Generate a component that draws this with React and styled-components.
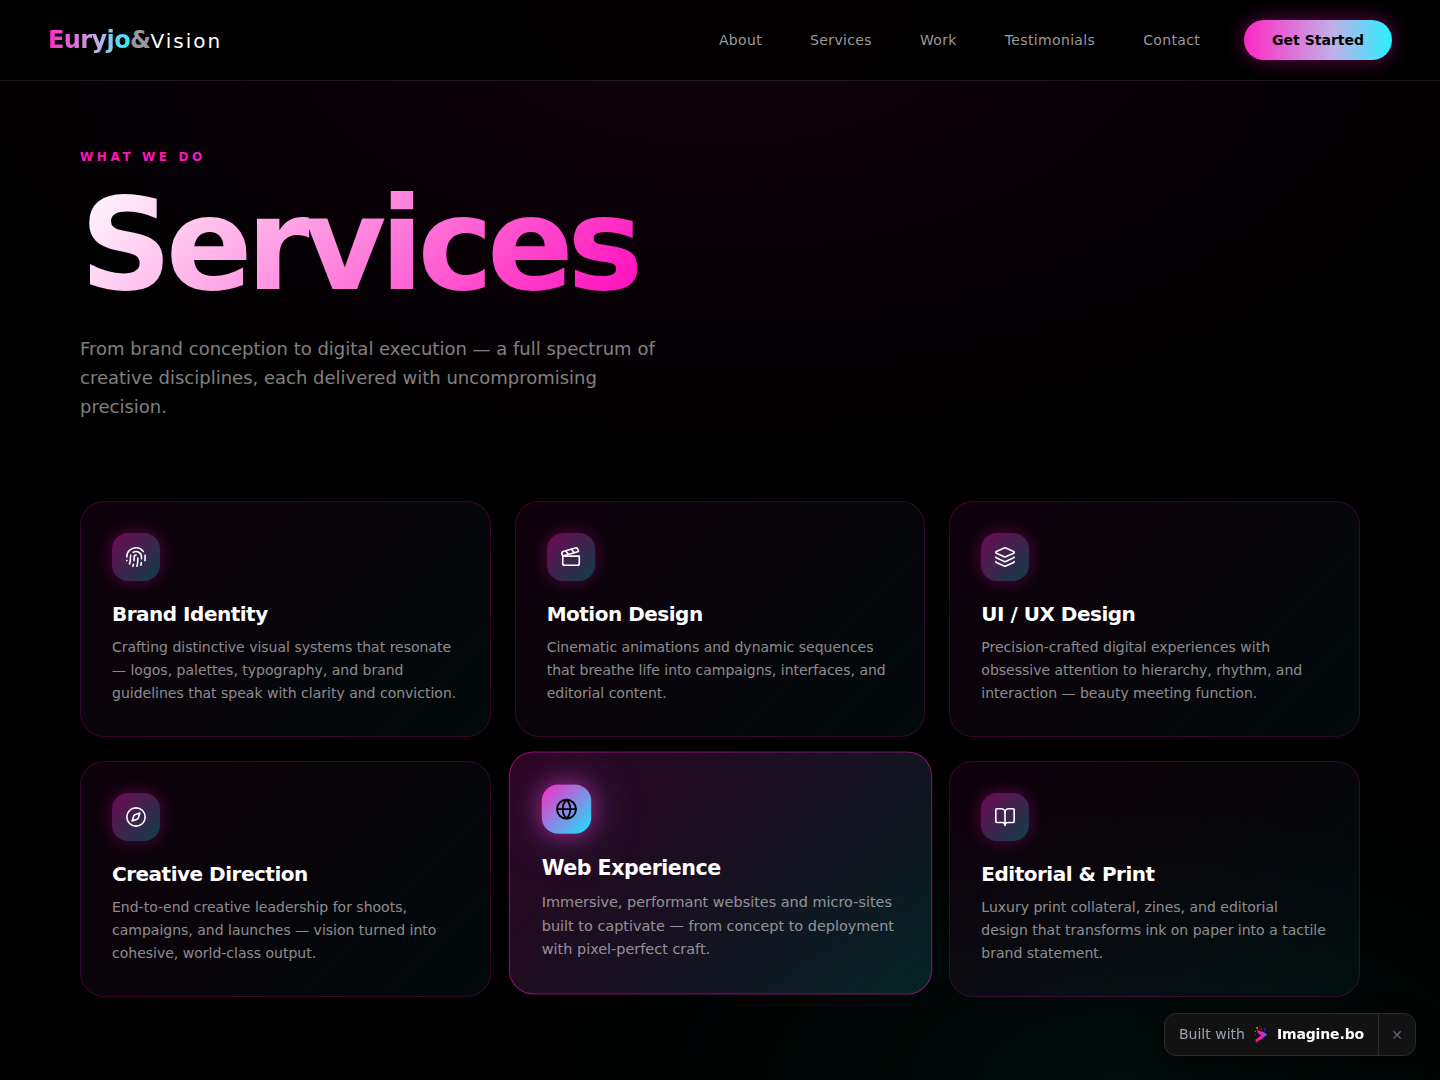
import React from "react";
import styled, { createGlobalStyle, css } from "styled-components";
import {
  FingerprintPattern,
  Clapperboard,
  Layers,
  Compass,
  Globe,
  BookOpen,
} from "lucide-react";

const PINK = "#ff14be";
const BRAND_GRADIENT = "linear-gradient(90deg, #ff28c4 0%, #c0b0e8 60%, #28f0ff 100%)";

const GlobalStyle = createGlobalStyle`
  *, *::before, *::after { box-sizing: border-box; }
  body {
    margin: 0;
    background: #000;
    color: #fff;
    font-family: "DejaVu Sans", sans-serif;
  }
  h1, h2, p, ul { margin: 0; padding: 0; }
  button { font-family: inherit; cursor: pointer; }
`;

const Page = styled.div`
  min-height: 100vh;
  background:
    radial-gradient(ellipse 60% 40% at 78% 100%, rgba(0, 255, 220, 0.05), transparent 70%),
    radial-gradient(ellipse 85% 64% at 50% 0%, rgba(255, 20, 190, 0.07), transparent 70%),
    #000;
`;

const Header = styled.header`
  display: flex;
  align-items: center;
  justify-content: space-between;
  height: 81px;
  padding: 0 48px;
  background: rgba(0, 0, 0, 0.85);
  border-bottom: 1px solid rgba(255, 255, 255, 0.1);
`;

const Logo = styled.a`
  display: flex;
  align-items: baseline;
  color: #fff;
  font-size: 24px;
  font-weight: 700;
  line-height: 32px;
  letter-spacing: -0.025em;
  text-decoration: none;
`;

const LogoName = styled.span`
  background: ${BRAND_GRADIENT};
  background-clip: text;
  color: transparent;
`;

const LogoAmp = styled.span`
  color: #999;
`;

const LogoSuffix = styled.span`
  font-size: 20px;
  font-weight: 400;
  letter-spacing: 0.1em;
`;

const Nav = styled.nav`
  display: flex;
  align-items: center;
  gap: 44px;
`;

const NavList = styled.ul`
  display: flex;
  gap: 48px;
  list-style: none;
`;

const NavLink = styled.a`
  color: #999;
  font-size: 14px;
  line-height: 20px;
  letter-spacing: 0.025em;
  text-decoration: none;
`;

const PrimaryButton = styled.button`
  height: 40px;
  padding: 0 28px;
  border: 0;
  border-radius: 20px;
  background: ${BRAND_GRADIENT};
  box-shadow: 0 0 20px rgba(255, 20, 190, 0.4);
  color: #000;
  font-size: 14px;
  font-weight: 700;
`;

const Main = styled.main`
  max-width: 1440px;
  margin: 0 auto;
  padding: 68px 80px 80px;
`;

const Hero = styled.section`
  display: flex;
  flex-direction: column;
  align-items: flex-start;
  margin-bottom: 80px;
`;

const Eyebrow = styled.p`
  color: ${PINK};
  font-size: 12px;
  font-weight: 700;
  line-height: 16px;
  letter-spacing: 0.3em;
`;

const Title = styled.h1`
  margin: 16px 0 25px;
  background: linear-gradient(135deg, #fff 0%, #ff14be 95%);
  background-clip: text;
  color: transparent;
  font-size: 128px;
  font-weight: 700;
  line-height: 128px;
  letter-spacing: -0.05em;
`;

const Lead = styled.p`
  max-width: 600px;
  color: rgba(255, 255, 255, 0.5);
  font-size: 18px;
  line-height: 29px;
`;

const Grid = styled.section`
  display: grid;
  grid-template-columns: repeat(3, 1fr);
  gap: 24px;
`;

const IconTile = styled.div`
  display: grid;
  place-items: center;
  width: 48px;
  height: 48px;
  margin-bottom: 20px;
  border-radius: 16px;
  background: linear-gradient(135deg, rgba(255, 20, 190, 0.4), rgba(20, 240, 255, 0.25));
  box-shadow: 0 0 16px rgba(255, 20, 190, 0.3);
  color: #fff;
`;

const Card = styled.article`
  padding: 31px;
  border: 1px solid rgba(255, 20, 190, 0.18);
  border-radius: 24px;
  background: linear-gradient(135deg, rgba(255, 20, 190, 0.06), rgba(20, 240, 255, 0.04));

  ${({ $featured }) =>
    $featured &&
    css`
      border-color: rgba(255, 20, 190, 0.5);
      background: linear-gradient(135deg, rgba(255, 20, 190, 0.18), rgba(20, 240, 255, 0.12));
      transform: translateY(-6px) scale(1.03);

      ${IconTile} {
        background: linear-gradient(135deg, #ff28c4, #14e6ff);
        box-shadow:
          0 0 20px rgba(255, 40, 200, 0.5),
          0 0 48px rgba(150, 120, 255, 0.4);
        color: #000;
      }
    `}
`;

const CardTitle = styled.h2`
  margin-bottom: 8px;
  font-size: 20px;
  font-weight: 700;
  line-height: 27px;
  letter-spacing: -0.025em;
`;

const CardText = styled.p`
  color: rgba(255, 255, 255, 0.55);
  font-size: 14px;
  line-height: 23px;
`;

const Badge = styled.aside`
  position: fixed;
  right: 24px;
  bottom: 24px;
  display: flex;
  height: 43px;
  border: 1px solid #2a2a2a;
  border-radius: 12px;
  background: #121212;
  box-shadow: 0 8px 24px rgba(0, 0, 0, 0.4);
  overflow: hidden;
`;

const BadgeLink = styled.a`
  display: flex;
  align-items: center;
  gap: 8px;
  padding: 0 14px 1px;
  color: #9ca3af;
  font-size: 14px;
  line-height: 20px;
  text-decoration: none;
`;

const BadgeBrand = styled.strong`
  color: #fff;
  font-weight: 700;
  letter-spacing: -0.01em;
`;

const BadgeClose = styled.button`
  width: 37px;
  padding: 0;
  border: 0;
  border-left: 1px solid #2a2a2a;
  background: none;
  color: #5b6472;
  font-size: 14px;
`;

const links = ["About", "Services", "Work", "Testimonials", "Contact"];

const services = [
  {
    icon: FingerprintPattern,
    title: "Brand Identity",
    text: "Crafting distinctive visual systems that resonate — logos, palettes, typography, and brand guidelines that speak with clarity and conviction.",
  },
  {
    icon: Clapperboard,
    title: "Motion Design",
    text: "Cinematic animations and dynamic sequences that breathe life into campaigns, interfaces, and editorial content.",
  },
  {
    icon: Layers,
    title: "UI / UX Design",
    text: "Precision-crafted digital experiences with obsessive attention to hierarchy, rhythm, and interaction — beauty meeting function.",
  },
  {
    icon: Compass,
    title: "Creative Direction",
    text: "End-to-end creative leadership for shoots, campaigns, and launches — vision turned into cohesive, world-class output.",
  },
  {
    icon: Globe,
    title: "Web Experience",
    text: "Immersive, performant websites and micro-sites built to captivate — from concept to deployment with pixel-perfect craft.",
    featured: true,
  },
  {
    icon: BookOpen,
    title: "Editorial & Print",
    text: "Luxury print collateral, zines, and editorial design that transforms ink on paper into a tactile brand statement.",
  },
];

function ImagineMark() {
  return (
    <svg width="16" height="18" viewBox="0 0 16 18" aria-hidden="true">
      <defs>
        <linearGradient id="mark" x1="0" y1="0" x2="1" y2="0">
          <stop offset="0" stopColor="#ff1478" />
          <stop offset="0.5" stopColor="#f01fc0" />
          <stop offset="0.75" stopColor="#9040e0" />
          <stop offset="1" stopColor="#2f7bff" />
        </linearGradient>
      </defs>
      <path d="M3.6 4.4 7.4 6.2 10.6 7 14.2 9.6 10 13 3 17.4 2.4 14.8 8.2 10.4 5 8.2Z" fill="url(#mark)" />
      <circle cx="4.2" cy="3" r="1" fill="#ff7a2f" />
      <circle cx="7" cy="1.6" r="0.5" fill="#ff5a4f" />
      <circle cx="8.2" cy="3.8" r="0.6" fill="#e0408f" />
      <circle cx="11.4" cy="3.4" r="0.5" fill="#3f6bff" />
      <circle cx="2.4" cy="6.4" r="0.6" fill="#ff3f6f" />
      <circle cx="2.2" cy="9.6" r="0.6" fill="#ff1493" />
      <circle cx="12" cy="5.6" r="0.6" fill="#5f4fff" />
    </svg>
  );
}

export default function App() {
  return (
    <Page>
      <GlobalStyle />
      <Header>
        <Logo href="#home">
          <LogoName>Euryjo</LogoName>
          <LogoAmp>&amp;</LogoAmp>
          <LogoSuffix>Vision</LogoSuffix>
        </Logo>
        <Nav aria-label="Main">
          <NavList>
            {links.map((label) => (
              <li key={label}>
                <NavLink href={`#${label.toLowerCase()}`}>{label}</NavLink>
              </li>
            ))}
          </NavList>
          <PrimaryButton type="button">Get Started</PrimaryButton>
        </Nav>
      </Header>
      <Main>
        <Hero>
          <Eyebrow>WHAT WE DO</Eyebrow>
          <Title>Services</Title>
          <Lead>
            From brand conception to digital execution — a full spectrum of creative
            disciplines, each delivered with uncompromising precision.
          </Lead>
        </Hero>
        <Grid>
          {services.map(({ icon: Icon, title, text, featured }) => (
            <Card key={title} $featured={featured}>
              <IconTile>
                <Icon size={22} strokeWidth={featured ? 2 : 1.75} aria-hidden="true" />
              </IconTile>
              <CardTitle>{title}</CardTitle>
              <CardText>{text}</CardText>
            </Card>
          ))}
        </Grid>
      </Main>
      <Badge>
        <BadgeLink href="#imagine">
          Built with
          <ImagineMark />
          <BadgeBrand>Imagine.bo</BadgeBrand>
        </BadgeLink>
        <BadgeClose type="button" aria-label="Close">
          ✕
        </BadgeClose>
      </Badge>
    </Page>
  );
}
